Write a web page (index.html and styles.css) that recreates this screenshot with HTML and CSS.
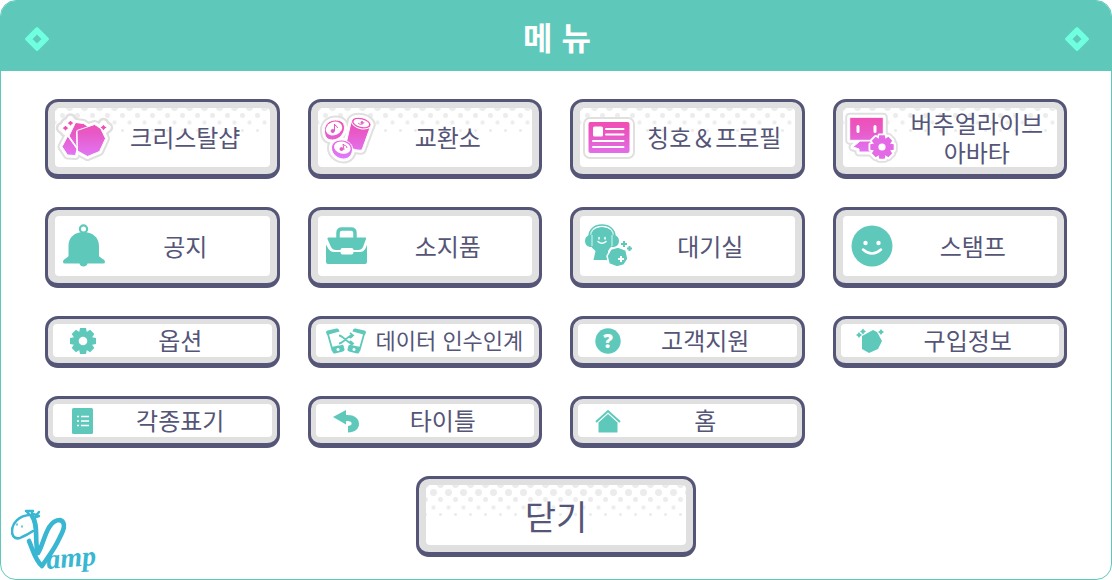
FILE: index.html
```html
<!DOCTYPE html>
<html lang="ko">
  <head>
    <meta charset="UTF-8" />
    <meta name="viewport" content="width=device-width, initial-scale=1.0" />
    <title>메뉴</title>
    <link rel="stylesheet" href="styles.css">
  </head>
  <body>
    <!-- shared shapes -->
    <svg class="defs" width="0" height="0" aria-hidden="true">
      <defs>
        <linearGradient id="pink" gradientUnits="userSpaceOnUse" x1="0" y1="6" x2="0" y2="44">
          <stop offset="0" stop-color="#f04fb4" />
          <stop offset="0.35" stop-color="#e859c6" />
          <stop offset="1" stop-color="#e078fa" />
        </linearGradient>
        <path id="spark" d="M0-3Q1-1 3 0Q1 1 0 3Q-1 1-3 0Q-1-1 0-3z" />
        <g id="teeth">
          <circle r="9.4" />
          <path id="tooth" d="M-3-13h6l1 5v16l-1 5h-6l-1-5v-16z" />
          <use href="#tooth" transform="rotate(45)" />
          <use href="#tooth" transform="rotate(90)" />
          <use href="#tooth" transform="rotate(135)" />
        </g>
        <g id="crystals">
          <path d="M12 22L18.5 8.5l8 1 6 4-13 4 .5 16z" />
          <path d="M5 32.7L10.7 22 20 35l-1.500 6.500-8-.5z" />
          <path d="M20 16.500L37.500 10.500l6 3.500 5 10.500-6 13L30.500 42.500l-10-5.500z" />
          <use href="#spark" transform="translate(8.500 14) scale(1.300)" />
          <use href="#spark" transform="translate(13.500 9) scale(1.300)" />
          <use href="#spark" transform="translate(46.500 13.500) scale(1.300)" />
        </g>
        <g id="cans">
          <path d="M31.5 7L26 31c2 4 11 7 16 6l9-25z" />
          <ellipse cx="41.3" cy="10" rx="10" ry="5.5" transform="rotate(14 41 10)" />
          <path d="M4.5 17c0-6 5-10 11-10s9 3 9 8-5 12-12 12-8-5-8-10z" />
          <path d="M11.5 35c0-5 4-8 10-8s11 4 11 9-3 10-9 10-12-5-12-11z" />
        </g>
        <g id="avatar">
          <path d="M4.7 6.3h33.6v23H4.7z" />
          <path d="M8 36l7-6h12l4 11H14v-3z" />
          <use href="#teeth" transform="translate(37 36) scale(.9)" />
        </g>
      </defs>
    </svg>

    <main class="panel">
      <header class="panel-header">
        <svg class="gem" viewBox="0 0 26 26" aria-hidden="true"><path d="M13 2.500L23.500 13 13 23.500 2.500 13zM13 6.500L6.500 13l6.500 6.500 6.500-6.500z" /></svg>
        <h1>메 뉴</h1>
        <svg class="gem" viewBox="0 0 26 26" aria-hidden="true"><path d="M13 2.500L23.500 13 13 23.500 2.500 13zM13 6.500L6.500 13l6.500 6.500 6.500-6.500z" /></svg>
      </header>

      <nav class="menu">
        <button class="key dotted">
          <span class="face">
            <svg class="icon sticker" width="54" height="48" viewBox="0 0 54 48">
              <use class="rim" href="#crystals" /><use class="halo" href="#crystals" /><use class="ink" href="#crystals" />
            </svg>
            <span class="label">크리스탈샵</span>
          </span>
        </button>
        <button class="key dotted">
          <span class="face">
            <svg class="icon sticker" width="54" height="50" viewBox="0 0 54 50">
              <use class="rim" href="#cans" /><use class="halo" href="#cans" /><use class="ink" href="#cans" />
              <g fill="#fff">
                <ellipse cx="14" cy="15.5" rx="8.5" ry="6.7" transform="rotate(-25 14 15.5)" />
                <ellipse cx="22.5" cy="34.5" rx="8.5" ry="6" transform="rotate(15 22 34)" />
                <ellipse cx="41.3" cy="10" rx="8" ry="3.8" transform="rotate(14 41 10)" />
              </g>
              <g class="ink-line">
                <path d="M14.5 18v-7c0 2 3 1.5 3 4M24 37l-1-6c1 2 4 1 4 4M38 10c2 2 5 1.5 6-.5" />
                <circle cx="12.7" cy="18" r="1.6" /><circle cx="21.5" cy="36" r="1.5" /><circle cx="42" cy="9.5" r="1" />
              </g>
            </svg>
            <span class="label">교환소</span>
          </span>
        </button>
        <button class="key dotted">
          <span class="face face-long">
            <svg class="icon sticker" width="52" height="42" viewBox="0 0 52 42">
              <rect x="1" y="1" width="50" height="40" rx="6" fill="#fff" stroke="#e0e0e0" stroke-width="2" />
              <rect x="5.5" y="5" width="41" height="31" rx="2" fill="url(#pink)" />
              <rect x="10" y="9.5" width="10" height="10" rx="1.5" fill="#fff" />
              <path d="M23 12h17.5M23 17.5h17.5M10 24h30.5M10 30h30.5" stroke="#fff" stroke-width="2" stroke-linecap="round" />
            </svg>
            <span class="label">칭호＆프로필</span>
          </span>
        </button>
        <button class="key dotted">
          <span class="face face-long">
            <svg class="icon sticker" width="54" height="54" viewBox="0 0 54 54">
              <use class="rim" href="#avatar" /><use class="halo" href="#avatar" /><use class="ink" href="#avatar" />
              <g transform="translate(37 36) scale(.9)">
                <use href="#teeth" fill="#fff" stroke="#fff" stroke-width="4" stroke-linejoin="round" />
                <use href="#teeth" fill="#e36ae4" />
                <circle r="4" fill="#fff" />
              </g>
              <path d="M13 15.5v5M30 15.5v5" stroke="#fff" stroke-width="3" stroke-linecap="round" />
            </svg>
            <span class="label">버추얼라이브<br>아바타</span>
          </span>
        </button>

        <button class="key">
          <span class="face">
            <svg class="icon" width="42" height="44" viewBox="0 0 42 44">
              <circle cx="20.5" cy="5" r="3.6" fill="none" stroke="currentColor" stroke-width="2.2" />
              <path d="M5.5 32V22C5.5 13 12 8 20.5 8S36 13 36 22v10c1 2 6 3 6 6q0 1.5-2 1.5H24.5c-.5 4-7.5 4-8 0H2Q0 39.5 0 38c0-3 4.5-4 5.5-6z" />
            </svg>
            <span class="label">공지</span>
          </span>
        </button>
        <button class="key">
          <span class="face">
            <svg class="icon" width="42" height="38" viewBox="0 0 42 38">
              <path d="M12 12V6q0-4 4-4h9q4 0 4 4v6" fill="none" stroke="currentColor" stroke-width="3.5" />
              <path d="M2.500 10.5h37q1 0 .5 1.500l-3 8q-1.500 3-5 3h-4.500v-.5q0-1.500-2-1.500h-9q-2 0-2 1.500v.5H10q-3.500 0-5-3L1.500 12q-.5-1.500 1-1.500z" />
              <path d="M0 17.5c2 4 4 7.500 8 7.500h6.500q0 2.500 2 2.500h9q2 0 2-2.500H34c4 0 6-3.500 7-7.500V35q0 2-2 2H2q-2 0-2-2z" />
            </svg>
            <span class="label">소지품</span>
          </span>
        </button>
        <button class="key">
          <span class="face">
            <svg class="icon" width="48" height="44" viewBox="0 0 48 44">
              <path d="M4 15C4 7 10 3 17 3s13 4 13 12c0 4-2 7-5 9l-2 3 1 9H8.5l2-9C6 23 4 20 4 15z" />
              <path d="M4 13C4 5 10 1 17 1s13 4 13 12" fill="none" stroke="currentColor" stroke-width="1.6" />
              <path d="M5.5 13C5.5 6 11 2.5 17 2.5S28.5 6 28.5 13" fill="none" stroke="#fff" stroke-width=".8" />
              <path d="M5 11h2v12H5q-5-1-5-6t5-6zM29 11h-2v12h2q5-1 5-6t-5-6z" />
              <path d="M7 11v11M27 11v11" stroke="#fff" stroke-width=".8" />
              <path d="M14 13.5v1.5M20 13.5v1.5M13 17.5q4 3.500 8 0" fill="none" stroke="#fff" stroke-width="1.5" stroke-linecap="round" />
              <path d="M26 25l7-2 8 3 2 9-4 6-7 2-8-3-2-8z" stroke="#fff" stroke-width="1.500" />
              <path d="M36 32v6M33 35h6" stroke="#fff" stroke-width="2" />
              <path d="M39 17v6M36 20h6M44.500 22v5M42 24.500h5" stroke="currentColor" stroke-width="2" />
            </svg>
            <span class="label">대기실</span>
          </span>
        </button>
        <button class="key">
          <span class="face">
            <svg class="icon" width="42" height="42" viewBox="0 0 42 42">
              <circle cx="21" cy="21" r="20.5" />
              <circle cx="14.5" cy="18" r="2.2" fill="#fff" /><circle cx="27.500" cy="18" r="2.2" fill="#fff" />
              <path d="M12 24.5q9 8 18 0" fill="none" stroke="#fff" stroke-width="2.4" stroke-linecap="round" />
            </svg>
            <span class="label">스탬프</span>
          </span>
        </button>

        <button class="key slim">
          <span class="face">
            <svg class="icon" width="26" height="26" viewBox="-13 -13 26 26">
              <use href="#teeth" /><circle r="4.3" fill="#fff" />
            </svg>
            <span class="label">옵션</span>
          </span>
        </button>
        <button class="key slim">
          <span class="face face-small">
            <svg class="icon" width="40" height="26" viewBox="0 0 40 26">
              <g id="phone">
                <path d="M1.5 4.5L6.5 22l11-3.5" fill="none" stroke="currentColor" stroke-width="1.8" />
                <path d="M0 4Q0 3 1.5 2.5L10.5.5Q12.500 0 13 2l.5 1.500L1 7z" />
                <path d="M5.5 19L17 16.5l1.500 5q0 1.500-1.500 2l-8 2q-2 0-2.500-1.500z" />
                <circle cx="12" cy="21.5" r="1.5" fill="#fff" />
              </g>
              <use href="#phone" transform="matrix(-1 0 0 1 40 0)" />
              <path d="M13 7.5c4 0 9 8 13 8M13 15.5c4 0 9-8 13-8" fill="none" stroke="#fff" stroke-width="4" />
              <path d="M13 7.5c4 0 9 8 13 8M13 15.5c4 0 9-8 13-8M24 5l3 2.5-3 2.500M24 13l3 2.500-3 2.500" fill="none" stroke="currentColor" stroke-width="1.8" />
            </svg>
            <span class="label">데이터 인수인계</span>
          </span>
        </button>
        <button class="key slim">
          <span class="face">
            <svg class="icon" width="26" height="26" viewBox="0 0 26 26">
              <circle cx="13" cy="13" r="12.7" />
              <text class="question" x="13" y="20" text-anchor="middle">?</text>
            </svg>
            <span class="label">고객지원</span>
          </span>
        </button>
        <button class="key slim">
          <span class="face">
            <svg class="icon" width="26" height="26" viewBox="0 0 26 26">
              <path d="M4 8L15 2l4 2 5 9-4 8-9 4-7-4z" />
              <use href="#spark" x="1" y="7" /><use href="#spark" x="5" y="3.500" /><use href="#spark" x="23" y="4" />
            </svg>
            <span class="label">구입정보</span>
          </span>
        </button>

        <button class="key slim">
          <span class="face">
            <svg class="icon" width="26" height="26" viewBox="0 0 26 26">
              <rect x="2" y="0" width="21" height="26" rx="1.5" />
              <path d="M7 8.5h2M7 13h2M7 17.5h2M11 8.5h8M11 13h8M11 17.5h8" stroke="#fff" stroke-width="1.7" />
            </svg>
            <span class="label">각종표기</span>
          </span>
        </button>
        <button class="key slim">
          <span class="face">
            <svg class="icon" width="26" height="26" viewBox="0 0 26 26">
              <path d="M0 9L13 2v5c8-.5 13 3 13 9 0 5-4 8-11 8.500V18c3-.5 4-1.500 3.500-3 0-1.500-2.500-2-5.500-2v3.500z" />
            </svg>
            <span class="label">타이틀</span>
          </span>
        </button>
        <button class="key slim">
          <span class="face">
            <svg class="icon" width="26" height="26" viewBox="0 0 26 26">
              <path d="M3.500 14.500L13 6l9.500 8.500V24.500h-19z" />
              <path d="M1 14L13 3l12 11" fill="none" stroke="currentColor" stroke-width="2" />
            </svg>
            <span class="label">홈</span>
          </span>
        </button>
      </nav>

      <footer class="panel-footer">
        <svg class="logo" width="90" height="66" viewBox="0 0 90 66" role="img" aria-label="Vamp">
          <g fill="none" stroke="#38b6d2" stroke-linecap="round" stroke-linejoin="round">
            <path d="M15 2l5 5M21 2v6M28 3l-4 5M15 2h7M23 5l5 2-3 1" stroke-width="2.400" />
            <path d="M18 6C8 7 1 14 1 22c0 7 5 9 10 6 5-2 8-4 11-6" stroke-width="2.600" />
            <path d="M6 15v1M11 17v1" stroke-width="1.500" />
            <path d="M21 7c7 9 2 25 6 37 6-8 8-33 22-33 8 3 2 13-1 19-5 11-11 18-17 27-7-6-9-16-13-25" stroke-width="4.600" />
          </g>
          <text class="logo-text" x="36" y="60" transform="rotate(-5 36 60)">amp</text>
        </svg>
        <button class="key dotted close">
          <span class="face"><span class="label">닫기</span></span>
        </button>
      </footer>
    </main>
  </body>
</html>
```
FILE: styles.css
```css
:root {
  --teal: #5ec9ba;
  --navy: #555577;
  --grey: #e0e0e0;
  --dot: #ececec;
}

* {
  box-sizing: border-box;
}

body {
  margin: 0;
  background: #fff;
  color: var(--navy);
  font-family: "Noto Sans CJK KR", sans-serif;
}

.defs {
  position: absolute;
}

.panel {
  display: flex;
  flex-direction: column;
  min-height: 100vh;
  border: 1px solid var(--teal);
  border-radius: 16px;
  overflow: hidden;
}

.panel-header {
  display: flex;
  align-items: center;
  justify-content: space-between;
  height: 70px;
  padding: 0 21px 0 23px;
  background: var(--teal);
}

.panel-header h1 {
  margin: 0;
  color: #fff;
  font-size: 32px;
  font-weight: 700;
  line-height: 40px;
}

.gem {
  width: 26px;
  height: 26px;
  margin-top: 6px;
  fill: #70ffdf;
  fill-rule: evenodd;
  stroke: #70ffdf;
  stroke-width: 3;
  stroke-linejoin: round;
}

.menu {
  display: grid;
  grid-template-columns: repeat(4, 1fr);
  grid-template-rows: 80px 81px 52px 52px;
  gap: 28px;
  padding: 28px 44px;
}

.key {
  display: flex;
  min-width: 0;
  padding: 6px 7px 7px;
  border: 3px solid var(--navy);
  border-bottom-width: 5px;
  border-radius: 13px;
  background: var(--grey);
  color: inherit;
  font: inherit;
  font-size: 24px;
  line-height: 29px;
  cursor: pointer;
}

.key:active {
  filter: brightness(0.95);
}

.face {
  display: grid;
  flex: 1;
  grid-template-columns: 58px 1fr;
  align-items: center;
  min-width: 0;
  padding-right: 12px;
  border-radius: 4px;
  background: #fff;
}

.face-long {
  padding-right: 4px;
}

.slim {
  padding: 5px 5px 6px;
}

.slim .face {
  grid-template-columns: 60px 1fr;
  padding-right: 24px;
}

.slim .face-small {
  padding-right: 12px;
  font-size: 22px;
}

.icon {
  justify-self: center;
  overflow: visible;
  color: var(--teal);
  fill: currentColor;
}

.label {
  padding-bottom: 2px;
  text-align: center;
  white-space: nowrap;
}

/* halftone fading out from the top edge */
.dotted .face {
  background:
    radial-gradient(circle, var(--dot) 3px, transparent 4px) 7px -8px / 15px 15px repeat-x,
    radial-gradient(circle, var(--dot) 2px, transparent 3px) 0 0 / 15px 15px repeat-x,
    radial-gradient(circle, var(--dot) 1px, transparent 3px) 7px 7px / 15px 15px repeat-x,
    radial-gradient(circle, var(--dot) 1px, transparent 2px) 0 15px / 15px 15px repeat-x,
    #fff;
}

.rim {
  fill: var(--grey);
  stroke: var(--grey);
  stroke-width: 9;
  stroke-linejoin: round;
}

.halo {
  fill: #fff;
  stroke: #fff;
  stroke-width: 5;
  stroke-linejoin: round;
}

.ink {
  fill: url(#pink);
  stroke: #fff;
  stroke-width: 1;
}

.ink-line {
  fill: #e45bc8;
  stroke: #e45bc8;
  stroke-width: 1;
}

.ink-line path {
  fill: none;
}

.question {
  fill: #fff;
  font-family: "Open Sans", sans-serif;
  font-size: 19px;
  font-weight: 800;
}

.panel-footer {
  display: grid;
  flex: 1;
  grid-template-columns: 1fr 280px 1fr;
  padding: 0 10px 4px;
}

.logo {
  align-self: end;
}

.logo-text {
  fill: #38b6d2;
  font-family: "Liberation Serif", serif;
  font-size: 28px;
  font-style: italic;
  font-weight: 700;
}

.close {
  grid-column: 2;
  height: 81px;
  font-size: 34px;
}

.close .face {
  grid-template-columns: 1fr;
  padding: 0;
  background:
    radial-gradient(circle, var(--dot) 3px, transparent 4px) 7px -8px / 15px 15px repeat-x,
    radial-gradient(circle, var(--dot) 3px, transparent 4px) 0 0 / 15px 15px repeat-x,
    radial-gradient(circle, var(--dot) 2px, transparent 3px) 7px 7px / 15px 15px repeat-x,
    radial-gradient(circle, var(--dot) 1px, transparent 3px) 0 15px / 15px 15px repeat-x,
    radial-gradient(circle, var(--dot) 1px, transparent 2px) 7px 22px / 15px 15px repeat-x,
    #fff;
}

.close .label {
  padding: 0;
}
```
